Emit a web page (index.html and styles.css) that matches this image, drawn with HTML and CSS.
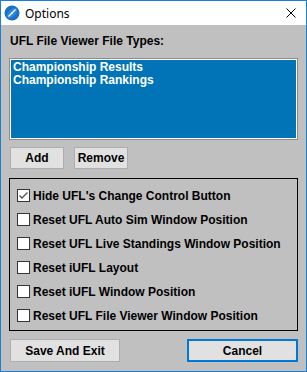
FILE: index.html
```html
<!DOCTYPE html>
<html>
<head>
<meta charset="utf-8">
<link rel="stylesheet" href="styles.css">
</head>
<body>
<div class="window">
  <div class="titlebar">
    <svg class="app-icon" width="16" height="16" viewBox="0 0 16 16">
      <circle cx="8" cy="8" r="7.5" fill="#1b6fc4"/>
      <ellipse cx="8" cy="8" rx="6.5" ry="3.6" transform="rotate(-45 8 8)" fill="#2b86de"/>
      <path d="M4.5 11.5 L11.5 4.5" stroke="#fff" stroke-width="1.3"/>
      <path d="M6 9 L7 10 M7.5 7.5 L8.5 8.5 M9 6 L10 7" stroke="#fff" stroke-width="1"/>
    </svg>
    <span class="title">Options</span>
    <svg class="close" width="10" height="10" viewBox="0 0 10 10">
      <path d="M0.5 0.5 L9.5 9.5 M9.5 0.5 L0.5 9.5" stroke="#000" stroke-width="1"/>
    </svg>
  </div>
  <div class="content">
    <div class="label">UFL File Viewer File Types:</div>
    <div class="listbox">
      <div class="item">Championship Results</div>
      <div class="item">Championship Rankings</div>
    </div>
    <div class="btnrow">
      <button class="btn small">Add</button>
      <button class="btn small">Remove</button>
    </div>
    <div class="group">
      <label class="check"><span class="box checked"><svg width="11" height="11" viewBox="0 0 11 11"><path d="M1.5 5.5 L4 8 L9.5 2.5" stroke="#555" stroke-width="1.4" fill="none"/></svg></span>Hide UFL's Change Control Button</label>
      <label class="check"><span class="box"></span>Reset UFL Auto Sim Window Position</label>
      <label class="check"><span class="box"></span>Reset UFL Live Standings Window Position</label>
      <label class="check"><span class="box"></span>Reset iUFL Layout</label>
      <label class="check"><span class="box"></span>Reset iUFL Window Position</label>
      <label class="check"><span class="box"></span>Reset UFL File Viewer Window Position</label>
    </div>
    <div class="footer">
      <button class="btn wide">Save And Exit</button>
      <button class="btn wide default">Cancel</button>
    </div>
  </div>
</div>
</body>
</html>
```

FILE: styles.css
```css
html, body {
  margin: 0;
  padding: 0;
  background: #fff;
}
.window {
  width: 307px;
  height: 372px;
  box-sizing: border-box;
  border: 1px solid #1a7fd6;
  display: flex;
  flex-direction: column;
  font-family: "Liberation Sans", Arial, sans-serif;
}
.titlebar {
  height: 24px;
  background: #fff;
  display: flex;
  align-items: center;
  padding-left: 3px;
  padding-right: 10px;
}
.title {
  font-family: "Noto Sans", "Open Sans", sans-serif;
  font-size: 12px;
  margin-left: 5px;
  color: #000;
  flex: 1;
}
.content {
  flex: 1;
  background: #c0c0c0;
  padding: 0 8px;
  display: flex;
  flex-direction: column;
}
.label {
  font-weight: bold;
  font-size: 12px;
  line-height: 14px;
  margin-top: 9px;
  margin-left: 1px;
}
.listbox {
  margin-top: 10px;
  height: 82px;
  box-sizing: border-box;
  border: 1px solid #8c8c8c;
  box-shadow: inset 0 0 0 1px #fff;
  background: #0074b7;
  padding: 2px 3px;
}
.item {
  color: #fff;
  font-weight: bold;
  font-size: 12px;
  line-height: 13px;
}
.btnrow {
  display: flex;
  gap: 10px;
  margin-top: 7px;
  margin-left: 1px;
}
.btn {
  font-family: "Liberation Sans", Arial, sans-serif;
  font-weight: bold;
  font-size: 12px;
  background: #e1e1e1;
  border: 1px solid #adadad;
  color: #000;
  padding: 0;
  margin: 0;
  box-sizing: border-box;
}
.btn.small {
  width: 54px;
  height: 22px;
}
.group {
  margin-top: 9px;
  height: 153px;
  box-sizing: border-box;
  border: 1px solid #000;
  padding: 10px 0 0 7px;
  display: flex;
  flex-direction: column;
  gap: 11px;
}
.check {
  display: flex;
  align-items: center;
  height: 13px;
  font-weight: bold;
  font-size: 12px;
  white-space: nowrap;
}
.box {
  width: 13px;
  height: 13px;
  box-sizing: border-box;
  border: 1px solid #333;
  background: #fff;
  margin-right: 3px;
  display: flex;
  align-items: center;
  justify-content: center;
}
.footer {
  display: flex;
  justify-content: space-between;
  margin-top: 8px;
  margin-left: 1px;
}
.btn.wide {
  width: 111px;
  height: 23px;
}
.btn.wide:first-child {
  width: 110px;
}
.btn.default {
  border: 2px solid #0078d7;
}
```
